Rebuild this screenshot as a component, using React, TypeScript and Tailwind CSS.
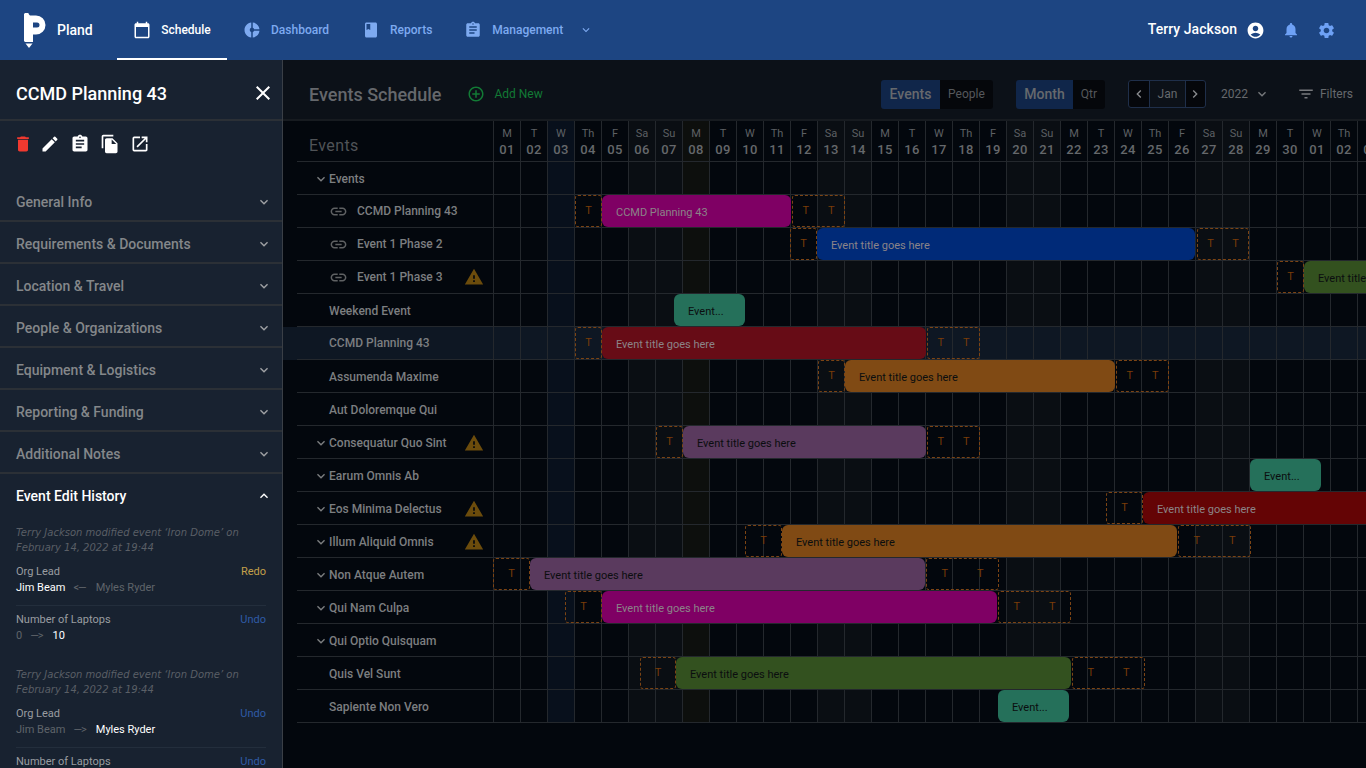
import {
  MdAccountCircle, MdAddCircleOutline, MdAssignment, MdBook, MdCalendarToday, MdChevronLeft, MdChevronRight,
  MdClose, MdDelete, MdDonutSmall, MdEdit, MdExpandLess, MdExpandMore, MdFileCopy, MdFilterList, MdLink,
  MdNotifications, MdOpenInNew, MdSettings, MdWarning,
} from 'react-icons/md';

const DAY_NAMES = ['M', 'T', 'W', 'Th', 'F', 'Sa', 'Su'];
const DAY_NUMS = Array.from({ length: 33 }, (_, i) => String(i < 30 ? i + 1 : i - 29).padStart(2, '0'));

function columnBg(i: number) {
  if (i === 2) return 'bg-[#08101c]';
  if (i === 7) return 'bg-[#0d0f0d]';
  if (i % 7 === 5 || i % 7 === 6) return 'bg-[#0a0e13]';
  return '';
}

type Bar = { left: number; right: number; color: string; label: string; dark?: boolean };
type Row = {
  name: string;
  kind?: 'chevron' | 'link';
  warn?: boolean;
  active?: boolean;
  before?: [number, number];
  after?: [number, number];
  bar?: Bar;
};

const rows: Row[] = [
  { name: 'Events', kind: 'chevron' },
  { name: 'CCMD Planning 43', kind: 'link', before: [575, 601], after: [792, 844], bar: { left: 602, right: 791, color: 'bg-[#7f0064]', label: 'CCMD Planning 43' } },
  { name: 'Event 1 Phase 2', kind: 'link', before: [790, 816], after: [1197, 1248], bar: { left: 817, right: 1195, color: 'bg-[#002a78]', label: 'Event title goes here' } },
  { name: 'Event 1 Phase 3', kind: 'link', warn: true, before: [1277, 1303], bar: { left: 1304, right: 1400, color: 'bg-[#33511f]', label: 'Event title goes here', dark: true } },
  { name: 'Weekend Event', bar: { left: 674, right: 745, color: 'bg-[#25705a]', label: 'Event...', dark: true } },
  { name: 'CCMD Planning 43', active: true, before: [575, 601], after: [927, 979], bar: { left: 602, right: 926, color: 'bg-[#670c16]', label: 'Event title goes here' } },
  { name: 'Assumenda Maxime', before: [818, 844], after: [1116, 1168], bar: { left: 845, right: 1115, color: 'bg-[#804a14]', label: 'Event title goes here', dark: true } },
  { name: 'Aut Doloremque Qui' },
  { name: 'Consequatur Quo Sint', kind: 'chevron', warn: true, before: [656, 682], after: [927, 979], bar: { left: 683, right: 926, color: 'bg-[#5a3a5e]', label: 'Event title goes here', dark: true } },
  { name: 'Earum Omnis Ab', kind: 'chevron', bar: { left: 1250, right: 1321, color: 'bg-[#25705a]', label: 'Event...', dark: true } },
  { name: 'Eos Minima Delectus', kind: 'chevron', warn: true, before: [1106, 1142], bar: { left: 1143, right: 1400, color: 'bg-[#640405]', label: 'Event title goes here' } },
  { name: 'Illum Aliquid Omnis', kind: 'chevron', warn: true, before: [745, 781], after: [1178, 1250], bar: { left: 782, right: 1177, color: 'bg-[#804a14]', label: 'Event title goes here', dark: true } },
  { name: 'Non Atque Autem', kind: 'chevron', before: [493, 529], after: [926, 998], bar: { left: 530, right: 925, color: 'bg-[#5a3a5e]', label: 'Event title goes here', dark: true } },
  { name: 'Qui Nam Culpa', kind: 'chevron', before: [565, 601], after: [998, 1070], bar: { left: 602, right: 997, color: 'bg-[#7f0064]', label: 'Event title goes here' } },
  { name: 'Qui Optio Quisquam', kind: 'chevron' },
  { name: 'Quis Vel Sunt', before: [640, 675], after: [1072, 1144], bar: { left: 676, right: 1071, color: 'bg-[#33511f]', label: 'Event title goes here', dark: true } },
  { name: 'Sapiente Non Vero', bar: { left: 998, right: 1069, color: 'bg-[#25705a]', label: 'Event...', dark: true } },
];

const sections = ['General Info', 'Requirements & Documents', 'Location & Travel', 'People & Organizations', 'Equipment & Logistics', 'Reporting & Funding', 'Additional Notes'];

const TRACK_X = 493;

function TravelBox({ span, count }: { span: [number, number]; count: number }) {
  return (
    <div
      className="absolute top-0 h-[32px] flex items-center rounded-[3px] border border-dashed border-[#7c4414] text-[11px] text-[#7a3c08]"
      style={{ left: span[0] - TRACK_X, width: span[1] - span[0] + 1 }}
    >
      {Array.from({ length: count }).map((_, i) => (
        <span key={i} className="flex-1 text-center">T</span>
      ))}
    </div>
  );
}

function GanttRow({ row }: { row: Row }) {
  return (
    <div className={row.active ? 'flex -ml-[14px] pl-[14px] bg-[#0e1723]' : 'flex -ml-[14px] pl-[14px]'}>
      <div className="flex border-b border-[#24282d] h-[33px]">
        <div className={`w-[196px] shrink-0 flex items-center text-[12px] font-medium text-[#7c7e80] ${row.kind === 'link' || row.active ? '' : 'pt-[1px]'}`}>
          {row.kind === 'chevron' && (
            <div className="w-[32px] pl-[16px] shrink-0"><MdExpandMore size={16} className="text-[#7c7e80]" /></div>
          )}
          {row.kind === 'link' && (
            <div className="w-[60px] pl-[32px] shrink-0"><MdLink size={19} className="text-[#5f6163]" /></div>
          )}
          {!row.kind && <div className="w-[32px] shrink-0" />}
          <span className="flex-1 whitespace-nowrap">{row.name}</span>
          {row.warn && <MdWarning size={20} className="mr-[9px] text-[#6c4c0c]" />}
        </div>
        <div className="relative flex">
          {DAY_NUMS.map((_, i) => (
            <div key={i} className={`w-[27px] shrink-0 border-l border-[#24282d] ${row.active ? '' : columnBg(i)}`} />
          ))}
          {row.before && <TravelBox span={row.before} count={1} />}
          {row.after && <TravelBox span={row.after} count={2} />}
          {row.bar && (
            <div
              className={`absolute top-0 h-[32px] rounded-[6px] flex items-center pl-[14px] pt-[4px] text-[11px] whitespace-nowrap ${row.bar.color} ${row.bar.dark ? 'text-[#0b0e0f]' : 'text-[#8b8488]'}`}
              style={{ left: row.bar.left - TRACK_X, width: row.bar.right - row.bar.left }}
            >
              {row.bar.label}
            </div>
          )}
        </div>
      </div>
    </div>
  );
}

function NavItem({ icon, label, className }: { icon: React.ReactNode; label: string; className: string }) {
  return (
    <div className={`flex items-center gap-[10px] text-[12px] font-medium text-[#7eaaf0] ${className}`}>
      {icon}
      <span>{label}</span>
    </div>
  );
}

function HistoryChange({ label, action, actionClass, from, to, arrow, toFirst, last }: {
  label: string; action: string; actionClass: string; from: string; to: string; arrow: string; toFirst?: boolean; last?: boolean;
}) {
  return (
    <div className={last ? 'pt-[6px] pb-[23px]' : 'pt-[6px] pb-[9px] border-b border-[#232e3c]'}>
      <div className="flex justify-between h-[16px] items-center">
        <span className="text-[#9a9da1]">{label}</span>
        <span className={actionClass}>{action}</span>
      </div>
      <div className="flex h-[16px] items-center">
        <span className={toFirst ? 'text-white' : 'text-[#5f646a]'}>{from}</span>
        <span className="ml-[8px] mr-[10px] text-[#5f646a] tracking-[-1px]">{arrow}</span>
        <span className={toFirst ? 'text-[#5f646a]' : 'text-white'}>{to}</span>
      </div>
    </div>
  );
}

function HistoryEntry({ first }: { first: boolean }) {
  return (
    <div>
      <p className="italic font-['DejaVu_Sans',sans-serif] text-[#5a5f66] text-[10px] leading-[15px] pb-[3px] whitespace-nowrap">
        Terry Jackson modified event ‘Iron Dome’ on<br />February 14, 2022 at 19:44
      </p>
      <HistoryChange
        label="Org Lead"
        action={first ? 'Redo' : 'Undo'}
        actionClass={first ? 'text-[#c4a04a]' : 'text-[#2f5ba6]'}
        from="Jim Beam"
        to="Myles Ryder"
        arrow={first ? '<—' : '—>'}
        toFirst={first}
      />
      <HistoryChange label="Number of Laptops" action="Undo" actionClass="text-[#2f5ba6]" from="0" to="10" arrow="—>" last />
    </div>
  );
}

export default function App() {
  return (
    <div className="w-[1366px] h-[768px] overflow-hidden flex flex-col bg-[#0c1118] font-['Roboto',sans-serif]">
      {/* TOP BAR */}
      <header className="h-[60px] shrink-0 bg-[#1d4582] flex items-center">
        <div className="w-[117px] pl-[24px] flex items-center gap-[11px]">
          <svg width="22" height="35" viewBox="0 0 22 35" className="shrink-0">
            <path
              fillRule="evenodd"
              d="M0 3 A2.6 2.6 0 0 1 5 1.5 L6 2.5 H12 A9.5 9.5 0 0 1 12 21.5 H9 V29 H1 L0 28 Z M9 9.5 V14.5 H13 A2.5 2.5 0 0 0 13 9.5 Z"
              fill="#fff"
            />
            <path d="M1.5 30.5 H8.5 L5 35 Z" fill="#fff" />
          </svg>
          <span className="text-white text-[14px] font-medium">Pland</span>
        </div>
        <div className="w-[110px] h-full pt-[2px] flex items-center justify-center gap-[10px] border-b-2 border-white text-white text-[12px] font-medium">
          <MdCalendarToday size={18} />
          <span>Schedule</span>
        </div>
        <NavItem className="ml-[16px]" icon={<MdDonutSmall size={18} />} label="Dashboard" />
        <NavItem className="ml-[33px]" icon={<MdBook size={18} />} label="Reports" />
        <NavItem className="ml-[32px]" icon={<MdAssignment size={18} />} label="Management" />
        <MdExpandMore size={14} className="ml-[16px] text-[#7eaaf0]" />
        <div className="ml-auto flex items-center pr-[30px]">
          <span className="text-white text-[14px] font-medium mr-[9px] tracking-[0.05px] -mt-[2px]">Terry Jackson</span>
          <MdAccountCircle size={19} className="text-white" />
          <MdNotifications size={18} className="ml-[17px] text-[#6ea1f5]" />
          <MdSettings size={19} className="ml-[17px] text-[#6ea1f5]" />
        </div>
      </header>

      <div className="flex flex-1 min-h-0">
        {/* DETAIL DRAWER */}
        <aside className="w-[283px] shrink-0 bg-[#182230] border-r border-[#3a3f46] overflow-hidden">
          <div className="h-[61px] pt-[7px] flex items-center justify-between pl-[16px] pr-[7px] border-b-2 border-[#2b3036]">
            <h1 className="text-white text-[18px] font-medium">CCMD Planning 43</h1>
            <MdClose size={24} className="text-white" />
          </div>
          <div className="h-[59px] flex items-start pt-[13px] pl-[13px] gap-[10px] text-white">
            <MdDelete size={20} className="text-[#f0392f]" />
            <MdEdit size={20} className="-ml-[3px]" />
            <MdAssignment size={20} />
            <MdFileCopy size={20} />
            <MdOpenInNew size={20} />
          </div>
          {sections.map((s) => (
            <div key={s} className="h-[42px] pt-[4px] flex items-center justify-between pl-[16px] pr-[10px] border-b-2 border-[#2b3036] text-[14px] font-medium text-[#84878a]">
              <span>{s}</span>
              <MdExpandMore size={16} className="text-[#a0a2a5]" />
            </div>
          ))}
          <div className="h-[42px] pt-[2px] flex items-center justify-between pl-[16px] pr-[10px] text-[14px] font-medium text-white">
            <span>Event Edit History</span>
            <MdExpandLess size={16} />
          </div>
          <div className="px-[16px] pt-[9px] text-[11px]">
            <HistoryEntry first />
            <HistoryEntry first={false} />
          </div>
        </aside>

        {/* SCHEDULE */}
        <main className="flex-1 min-w-0 flex flex-col">
          <div className="h-[61px] pt-[9px] shrink-0 flex items-center pl-[26px] pr-[13px] border-b-2 border-[#171b20]">
            <h2 className="text-[18px] font-medium text-[#65686c]">Events Schedule</h2>
            <MdAddCircleOutline size={18} className="ml-[26px] text-[#127a35]" />
            <span className="ml-[9px] text-[12px] text-[#127a35]">Add New</span>
            <div className="ml-auto flex items-center h-[29px] rounded-[3px] overflow-hidden text-[#66696d]">
              <span className="w-[59px] h-full bg-[#10264a] flex items-center justify-center text-[14px] font-medium">Events</span>
              <span className="w-[53px] h-full bg-[#05070b] flex items-center justify-center text-[12px] text-[#55585c]">People</span>
            </div>
            <div className="ml-[23px] flex items-center h-[29px] rounded-[3px] overflow-hidden text-[#66696d]">
              <span className="w-[57px] h-full bg-[#10264a] flex items-center justify-center text-[14px] font-medium">Month</span>
              <span className="w-[32px] h-full bg-[#05070b] flex items-center justify-center text-[12px] text-[#55585c]">Qtr</span>
            </div>
            <div className="ml-[23px] flex h-[28px] w-[78px] rounded-[3px] border border-[#1f2f4a] bg-[#05070b] text-[#66696d]">
              <span className="w-[21px] flex items-center justify-center border-r border-[#1f2f4a]"><MdChevronLeft size={16} className="text-[#8a8c8f]" /></span>
              <span className="flex-1 flex items-center justify-center text-[12px] bg-[#0c1118]">Jan</span>
              <span className="w-[20px] flex items-center justify-center border-l border-[#1f2f4a]"><MdChevronRight size={16} className="text-[#8a8c8f]" /></span>
            </div>
            <span className="ml-[15px] text-[12px] text-[#66696d]">2022</span>
            <MdExpandMore size={16} className="ml-[6px] text-[#77797c]" />
            <MdFilterList size={18} className="ml-[27px] text-[#77797c]" />
            <span className="ml-[5px] text-[12px] text-[#66696d]">Filters</span>
          </div>

          <div className="flex-1 min-h-0 overflow-hidden bg-[#03070d] pl-[14px]">
            <div className="flex border-b border-[#24282d] h-[41px]">
              <div className="w-[196px] shrink-0 flex items-end pl-[12px] pb-[3px] text-[16px] tracking-[0.4px] text-[#505357]">Events</div>
              {DAY_NUMS.map((n, i) => (
                <div key={i} className={`w-[27px] shrink-0 border-l border-[#24282d] flex flex-col items-center pt-[6px] text-[#5d6064] ${columnBg(i)}`}>
                  <span className="text-[11px] leading-[14px]">{DAY_NAMES[i % 7]}</span>
                  <span className="text-[13px] leading-[18px] font-medium text-[#65686b] tracking-[0.3px]">{n}</span>
                </div>
              ))}
            </div>
            {rows.map((r, i) => (
              <GanttRow key={i} row={r} />
            ))}
          </div>
        </main>
      </div>
    </div>
  );
}
